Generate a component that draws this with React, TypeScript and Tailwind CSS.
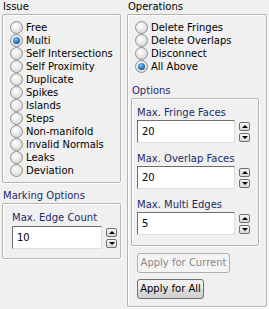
import React from 'react'

type Option = { label: string; checked?: boolean }

const issues: Option[] = [
  { label: 'Free' },
  { label: 'Multi', checked: true },
  { label: 'Self Intersections' },
  { label: 'Self Proximity' },
  { label: 'Duplicate' },
  { label: 'Spikes' },
  { label: 'Islands' },
  { label: 'Steps' },
  { label: 'Non-manifold' },
  { label: 'Invalid Normals' },
  { label: 'Leaks' },
  { label: 'Deviation' },
]

const operations: Option[] = [
  { label: 'Delete Fringes' },
  { label: 'Delete Overlaps' },
  { label: 'Disconnect' },
  { label: 'All Above', checked: true },
]

const Radio = ({ label, checked }: Option) => (
  <div className="flex items-center h-[13px]">
    <div className="w-[13px] h-[13px] rounded-full border border-[#8f8f8f] bg-[radial-gradient(circle_at_40%_35%,#ffffff,#cfcfcf)] flex items-center justify-center shrink-0">
      {checked && (
        <div className="w-[7px] h-[7px] rounded-full bg-[radial-gradient(circle_at_40%_35%,#7ec0f5,#1a5ea8_70%,#0e3c72)]" />
      )}
    </div>
    <span className="ml-[3px] whitespace-nowrap">{label}</span>
  </div>
)

const Spinner = () => (
  <div className="flex flex-col gap-[2px]">
    <div className="w-[11px] h-[9px] rounded-[2px] border border-[#707070] bg-[linear-gradient(#f7f7f7,#d8d8d8)] flex items-center justify-center">
      <div className="w-0 h-0 border-l-[3px] border-r-[3px] border-b-[3px] border-l-transparent border-r-transparent border-b-black" />
    </div>
    <div className="w-[11px] h-[9px] rounded-[2px] border border-[#707070] bg-[linear-gradient(#f7f7f7,#d8d8d8)] flex items-center justify-center">
      <div className="w-0 h-0 border-l-[3px] border-r-[3px] border-t-[3px] border-l-transparent border-r-transparent border-t-black" />
    </div>
  </div>
)

const NumberField = ({ label, value }: { label: string; value: string }) => (
  <div className="flex flex-col">
    <div className="h-[13px] leading-[13px] text-[#1c2a6b] whitespace-nowrap">{label}</div>
    <div className="flex items-center gap-[4px] mt-[1px]">
      <div className="w-[98px] h-[23px] bg-white border border-t-[#6f6f6f] border-l-[#6f6f6f] border-r-[#dedede] border-b-[#dedede] pl-[4px] pt-[4px] leading-[13px]">
        {value}
      </div>
      <Spinner />
    </div>
  </div>
)

const boxClass = 'border border-[#b4b4b4] shadow-[inset_1px_1px_0_#ffffff,1px_1px_0_#ffffff] rounded-[2px]'

export default function App() {
  return (
    <div className="w-[269px] h-[309px] bg-[#f0f0f0] flex font-['DejaVu_Sans',Verdana,sans-serif] text-[10px] leading-[13px] text-black overflow-hidden">
      {/* left column */}
      <div className="w-[119px] ml-[2px] flex flex-col">
        <div className="h-[14px] leading-[14px] pl-[1px]">Issue</div>
        <div className={`${boxClass} h-[169px] pt-[6px] pl-[7px] flex flex-col`}>
          {issues.map((o) => (
            <Radio key={o.label} {...o} />
          ))}
        </div>

        <div className="mt-[6px] h-[14px] leading-[14px] pl-[1px] text-[#1c2a6b]">Marking Options</div>
        <div className={`${boxClass} h-[56px] pt-[7px] pl-[9px]`}>
          <div className="flex flex-col">
            <div className="h-[13px] leading-[13px] text-[#1c2a6b]">Max. Edge Count</div>
            <div className="flex items-center gap-[4px] mt-[2px]">
              <div className="w-[90px] h-[23px] bg-white border border-t-[#6f6f6f] border-l-[#6f6f6f] border-r-[#dedede] border-b-[#dedede] pl-[4px] pt-[4px] leading-[13px]">
                10
              </div>
              <Spinner />
            </div>
          </div>
        </div>
      </div>

      {/* right column */}
      <div className="w-[140px] ml-[6px] flex flex-col">
        <div className="h-[14px] leading-[14px] pl-[1px]">Operations</div>
        <div className={`${boxClass} h-[293px] pt-[6px] flex flex-col`}>
          <div className="pl-[7px] flex flex-col">
            {operations.map((o) => (
              <Radio key={o.label} {...o} />
            ))}
          </div>

          <div className="ml-[3px] w-[128px] flex flex-col">
            <div className="mt-[11px] h-[14px] leading-[14px] pl-[1px] text-[#1c2a6b]">Options</div>
            <div className={`${boxClass} h-[148px] pt-[7px] pl-[5px] flex flex-col gap-[9px]`}>
              <NumberField label="Max. Fringe Faces" value="20" />
              <NumberField label="Max. Overlap Faces" value="20" />
              <NumberField label="Max. Multi Edges" value="5" />
            </div>
          </div>

          <div className="pl-[9px] flex flex-col items-start">
            <button
              disabled
              className="mt-[7px] w-[93px] h-[20px] rounded-[3px] border border-[#adb2b5] bg-[#f4f4f4] text-[#8a8a8a] leading-[18px] text-center whitespace-nowrap"
            >
              Apply for Current
            </button>
            <button className="mt-[6px] w-[67px] h-[20px] rounded-[3px] border border-[#707070] bg-[linear-gradient(#f2f2f2_0%,#ebebeb_50%,#dddddd_51%,#cfcfcf_100%)] text-black leading-[18px] text-center whitespace-nowrap">
              Apply for All
            </button>
          </div>
        </div>
      </div>
    </div>
  )
}
